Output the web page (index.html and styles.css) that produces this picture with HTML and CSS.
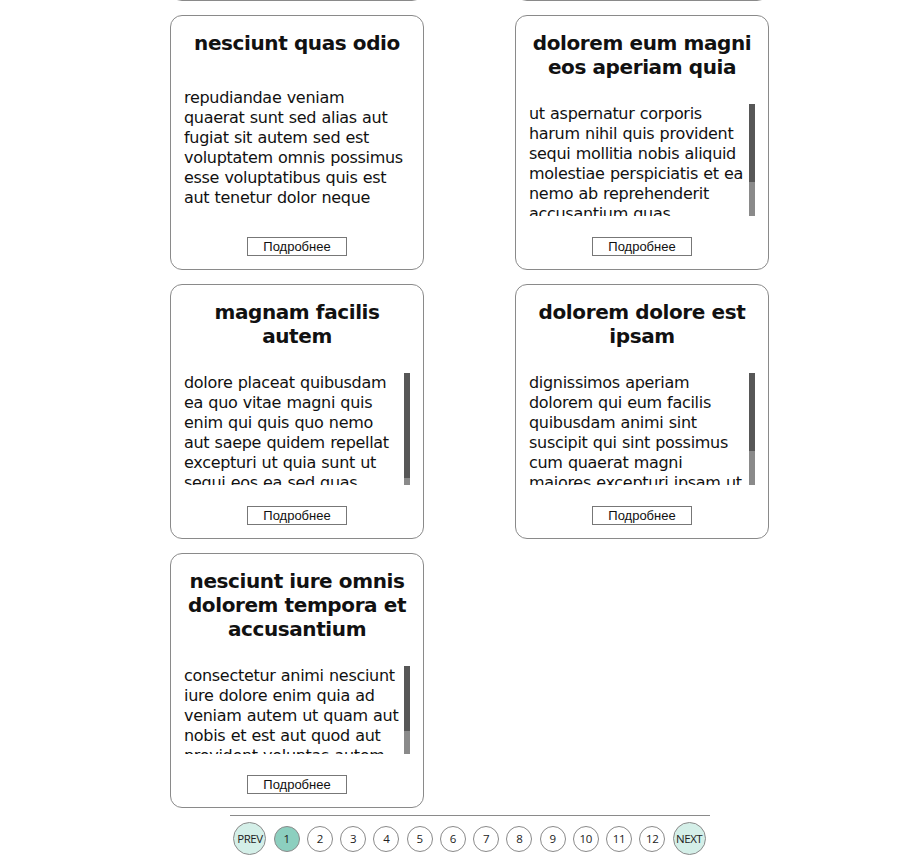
FILE: index.html
```html
<!DOCTYPE html>
<html lang="ru">
<head>
  <meta charset="UTF-8" />
  <meta name="viewport" content="width=device-width, initial-scale=1" />
  <title>Posts</title>
  <link rel="stylesheet" href="styles.css">
</head>
<body>
  <div class="page">

    <!-- список постов -->
    <div class="posts">
      <div class="post">
        <h2 class="post-title">ea molestias quasi exercitationem repellat qui ipsa sit aut</h2>
        <div class="post-body">
          <div class="post-text"><p>et iusto sed quo iure voluptatem occaecati omnis eligendi aut ad voluptatem doloribus vel accusantium quis pariatur molestiae porro eius odio et labore et velit aut</p></div>
          <div class="scroll-track"><div class="scroll-thumb"></div></div>
        </div>
        <button class="more-btn">Подробнее</button>
      </div>
      <div class="post">
        <h2 class="post-title">eum et est occaecati</h2>
        <div class="post-body">
          <div class="post-text"><p>ullam et saepe reiciendis voluptatem adipisci sit amet autem assumenda provident rerum culpa quis hic commodi nesciunt rem tenetur doloremque ipsam iure quis sunt voluptatem rerum illo velit</p></div>
          <div class="scroll-track"><div class="scroll-thumb"></div></div>
        </div>
        <button class="more-btn">Подробнее</button>
      </div>

      <div class="post">
        <h2 class="post-title">nesciunt quas odio</h2>
        <div class="post-body">
          <div class="post-text"><p>repudiandae veniam quaerat sunt sed alias aut fugiat sit autem sed est voluptatem omnis possimus esse voluptatibus quis est aut tenetur dolor neque</p></div>
          <div class="scroll-track"><div class="scroll-thumb"></div></div>
        </div>
        <button class="more-btn">Подробнее</button>
      </div>
      <div class="post">
        <h2 class="post-title">dolorem eum magni eos aperiam quia</h2>
        <div class="post-body">
          <div class="post-text"><p>ut aspernatur corporis harum nihil quis provident sequi mollitia nobis aliquid molestiae perspiciatis et ea nemo ab reprehenderit accusantium quas voluptate dolores velit et doloremque molestiae</p></div>
          <div class="scroll-track"><div class="scroll-thumb"></div></div>
        </div>
        <button class="more-btn">Подробнее</button>
      </div>

      <div class="post">
        <h2 class="post-title">magnam facilis autem</h2>
        <div class="post-body">
          <div class="post-text"><p>dolore placeat quibusdam ea quo vitae magni quis enim qui quis quo nemo aut saepe quidem repellat excepturi ut quia sunt ut sequi eos ea sed quas</p></div>
          <div class="scroll-track"><div class="scroll-thumb"></div></div>
        </div>
        <button class="more-btn">Подробнее</button>
      </div>
      <div class="post">
        <h2 class="post-title">dolorem dolore est ipsam</h2>
        <div class="post-body">
          <div class="post-text"><p>dignissimos aperiam dolorem qui eum facilis quibusdam animi sint suscipit qui sint possimus cum quaerat magni maiores excepturi ipsam ut commodi dolor voluptatum modi aut vitae</p></div>
          <div class="scroll-track"><div class="scroll-thumb"></div></div>
        </div>
        <button class="more-btn">Подробнее</button>
      </div>

      <div class="post">
        <h2 class="post-title">nesciunt iure omnis dolorem tempora et accusantium</h2>
        <div class="post-body">
          <div class="post-text"><p>consectetur animi nesciunt iure dolore enim quia ad veniam autem ut quam aut nobis et est aut quod aut provident voluptas autem voluptas</p></div>
          <div class="scroll-track"><div class="scroll-thumb"></div></div>
        </div>
        <button class="more-btn">Подробнее</button>
      </div>
    </div>

    <!-- пагинация -->
    <div class="pagination">
      <button class="pg-btn pg-edge">PREV</button>
      <button class="pg-btn active">1</button>
      <button class="pg-btn">2</button>
      <button class="pg-btn">3</button>
      <button class="pg-btn">4</button>
      <button class="pg-btn">5</button>
      <button class="pg-btn">6</button>
      <button class="pg-btn">7</button>
      <button class="pg-btn">8</button>
      <button class="pg-btn">9</button>
      <button class="pg-btn">10</button>
      <button class="pg-btn">11</button>
      <button class="pg-btn">12</button>
      <button class="pg-btn pg-edge">NEXT</button>
    </div>

  </div>

  <script>
    // свой скроллбар: высота ползунка по соотношению видимой и полной высоты текста
    document.querySelectorAll('.post-body').forEach(body => {
      const text = body.querySelector('.post-text');
      const track = body.querySelector('.scroll-track');
      const thumb = body.querySelector('.scroll-thumb');

      if (text.scrollHeight <= text.clientHeight) {
        track.classList.add('hidden');
        return;
      }
      thumb.style.height = (text.clientHeight * text.clientHeight / text.scrollHeight) + 'px';

      text.addEventListener('scroll', () => {
        const ratio = text.scrollTop / (text.scrollHeight - text.clientHeight);
        thumb.style.marginTop = ratio * (track.clientHeight - thumb.offsetHeight) + 'px';
      });
    });
  </script>
</body>
</html>
```

FILE: styles.css
```css
body {
  margin: 0;
  background: #fff;
  color: #111;
  font-family: "DejaVu Sans", sans-serif;
  overflow: hidden;
}

.page {
  width: 599px;
  margin-left: 170px;
}

/* сетка карточек, первый ряд уходит за верх окна */
.posts {
  display: grid;
  grid-template-columns: 254px 254px;
  column-gap: 91px;
  row-gap: 14px;
  margin-top: -254px;
}

.post {
  display: flex;
  flex-direction: column;
  height: 255px;
  box-sizing: border-box;
  border: 1px solid #8a8a8a;
  border-radius: 12px;
  padding: 15px 13px 13px;
}

.post-title {
  margin: 0;
  font-size: 20px;
  line-height: 24px;
  font-weight: bold;
  letter-spacing: -0.4px;
  text-align: center;
  color: #111;
}

.post-body {
  flex: 1;
  min-height: 0;
  margin: 25px 0 21px;
  display: flex;
}

.post-text {
  flex: 1;
  min-width: 0;
  padding-right: 1px;
  overflow-y: auto;
  scrollbar-width: none;
  display: flex;
  flex-direction: column;
}

.post-text::-webkit-scrollbar {
  display: none;
}

.post-text p {
  margin: auto 0;
  font-size: 16px;
  line-height: 20px;
  letter-spacing: -0.3px;
  word-spacing: 0.5px;
  color: #111;
}

.scroll-track {
  width: 6px;
  background: #8a8a8a;
}

.scroll-track.hidden {
  visibility: hidden;
}

.scroll-thumb {
  background: #575757;
}

.more-btn {
  align-self: center;
  width: 100px;
  height: 19px;
  padding: 0;
  border: 1px solid #777;
  background: #fff;
  color: #111;
  font-family: "Liberation Sans", Arial, sans-serif;
  font-size: 13px;
  cursor: pointer;
}

/* пагинация */
.pagination {
  width: 480px;
  margin: 7px auto 0;
  border-top: 1px solid #8a8a8a;
  padding-top: 6px;
  display: flex;
  justify-content: center;
  align-items: center;
  gap: 7.25px;
}

.pg-btn {
  width: 26px;
  height: 26px;
  padding: 0;
  border: 1px solid #8a8a8a;
  border-radius: 50%;
  background: #fff;
  color: #222;
  font-family: "Open Sans", sans-serif;
  font-size: 11.5px;
  letter-spacing: -0.3px;
  cursor: pointer;
}

.pg-btn.active {
  background: #8ccfbf;
}

.pg-edge {
  width: 33px;
  height: 33px;
  background: #d4efe8;
  letter-spacing: -0.5px;
}
```
